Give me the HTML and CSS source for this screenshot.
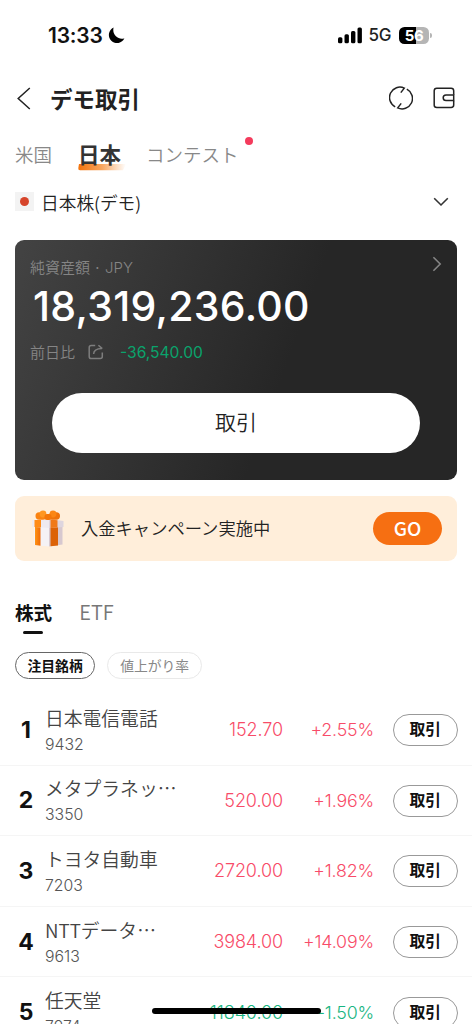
FILE: index.html
```html
<!DOCTYPE html>
<html lang="ja">
<head>
<meta charset="utf-8">
<meta name="viewport" content="width=device-width">
<title>デモ取引</title>
<link rel="stylesheet" href="styles.css">
</head>
<body>
<div class="screen">
  <div class="status">
    <span class="time">13:33</span>
    <svg class="moon" width="17" height="17" viewBox="0 0 17 17"><path d="M5.6 .6A8.1 8.1 0 1 0 16.4 11.2C11.5 13.6 3.6 8.6 5.6 .6Z" fill="#000"/></svg>
    <span class="spacer"></span>
    <svg class="signal" width="25" height="17" viewBox="0 0 25 17"><rect x="0" y="10.2" width="4.4" height="6" rx="1.5"/><rect x="6.5" y="7.3" width="4.4" height="8.9" rx="1.5"/><rect x="13" y="4" width="4.4" height="12.2" rx="1.5"/><rect x="19.5" y=".6" width="4.4" height="15.6" rx="1.5"/></svg>
    <span class="network">5G</span>
    <span class="battery">56</span>
    <span class="battery-cap"></span>
  </div>

  <header class="header">
    <svg class="back" width="14" height="23" viewBox="0 0 14 23"><path d="M12.8 1 1.2 11.5 12.8 22" fill="none" stroke="#222" stroke-width="1.5"/></svg>
    <h1 class="title">デモ取引</h1>
    <span class="spacer"></span>
    <svg class="refresh" width="24" height="24" viewBox="0 0 24 24" fill="none" stroke="#222" stroke-width="1.5"><path d="M6.2 20.8A10.4 10.4 0 0 1 15.3 2.1L11.8 6.6"/><path d="M17.8 3.2A10.4 10.4 0 0 1 8.7 21.9L12.2 17.4"/></svg>
    <svg class="wallet" width="22" height="22" viewBox="0 0 22 22" fill="none" stroke="#222" stroke-width="1.5"><path d="M20.7 7.7V3.8Q20.7 1.2 18.1 1.2H3.8Q1.2 1.2 1.2 3.8V18.2Q1.2 20.4 3.8 20.4H18.1Q20.7 20.4 20.7 18V13.7"/><path d="M20.7 7.9H13Q10.2 7.9 10.2 10.7T13 13.5H20.7Z"/></svg>
  </header>

  <nav class="markets">
    <span class="market">米国</span>
    <span class="market market-on"><svg class="swoosh" width="48" height="7" viewBox="0 0 48 7"><defs><linearGradient id="sw"><stop offset="0" stop-color="#f3730c"/><stop offset=".5" stop-color="#f9a65f"/><stop offset="1" stop-color="#fff"/></linearGradient></defs><path d="M1 0H48L45 6.2H2Q0 6.2 .3 4Z" fill="url(#sw)"/></svg><b class="market-label">日本</b></span>
    <span class="market market-contest">コンテスト<i class="dot"></i></span>
  </nav>

  <div class="account">
    <span class="flag"><i class="sun"></i></span>
    <span class="account-name">日本株(デモ)</span>
    <span class="spacer"></span>
    <svg width="16" height="10" viewBox="0 0 16 10"><path d="M1.2 1.3 8 8 14.8 1.3" fill="none" stroke="#333" stroke-width="1.6"/></svg>
  </div>

  <section class="card">
    <div class="card-head"><span>純資産額 · <span class="currency">JPY</span></span><svg width="10" height="16" viewBox="0 0 10 16"><path d="M1.4 1.2 8.2 8 1.4 14.8" fill="none" stroke="#858585" stroke-width="1.6"/></svg></div>
    <div class="total">18,319,236.00</div>
    <div class="change"><span>前日比</span><svg class="share" width="16" height="16" viewBox="0 0 16 16" fill="none" stroke="#7d7d7d" stroke-width="1.5"><path d="M7.2 1.6H3.2Q1.2 1.6 1.2 3.6V12.5Q1.2 14.6 3.2 14.6H12.3Q14.3 14.6 14.3 12.6V8.6"/><path d="M5.6 10Q5.9 4.8 13.8 4.6M10.4 1.2 14.3 4.6"/></svg><span class="diff">-36,540.00</span></div>
    <div class="trade-main">取引</div>
  </section>

  <section class="promo">
    <svg class="gift" width="32" height="37" viewBox="0 0 32 37">
      <defs><linearGradient id="or"><stop offset="0" stop-color="#ff9416"/><stop offset="1" stop-color="#ee6907"/></linearGradient></defs>
      <path d="M2 15H17V36.5L2 35Z" fill="#f5f2f5"/><path d="M17 15H30.5V34.5L17 36.5Z" fill="#d7c8cf"/>
      <path d="M3 17H8.5V35.8L3 35Z" fill="url(#or)"/><path d="M18.5 17H26V35.4L18.5 36.3Z" fill="#dc6206"/>
      <path d="M0 10 17 9V18L0 16.8Z" fill="#eeeaf0"/><path d="M17 9 31.5 11V17L17 18Z" fill="#ded5de"/>
      <path d="M2.5 10H9V17.3L2.5 17Z" fill="#ff8b16"/><path d="M18.5 9.5 25.5 10.2V17.5L18.5 18Z" fill="#f07918"/>
      <rect x="3.5" y="2.2" width="11" height="7.5" rx="3.7" fill="#fa8210"/><rect x="17" y="2.2" width="11" height="7.5" rx="3.7" fill="#ef730a"/>
      <circle cx="11" cy="4" r="3.4" fill="#ff9620"/><circle cx="21" cy="4" r="3.4" fill="#fb8613"/><rect x="12.5" y="4" width="7" height="6" rx="2.5" fill="#f37608"/>
    </svg>
    <span class="promo-text">入金キャンペーン実施中</span>
    <span class="spacer"></span>
    <span class="go">GO</span>
  </section>

  <nav class="kinds"><span class="kind kind-on">株式</span><span class="kind kind-etf">ETF</span></nav>

  <div class="chips"><span class="chip chip-on">注目銘柄</span><span class="chip">値上がり率</span></div>

  <div class="list">
    <div class="row"><span class="rank">1</span><div class="stock"><div class="name">日本電信電話</div><div class="code">9432</div></div><span class="price">152.70</span><span class="pct">+2.55%</span><span class="trade">取引</span></div>
    <div class="row"><span class="rank">2</span><div class="stock"><div class="name">メタプラネッ…</div><div class="code">3350</div></div><span class="price">520.00</span><span class="pct">+1.96%</span><span class="trade">取引</span></div>
    <div class="row"><span class="rank">3</span><div class="stock"><div class="name">トヨタ自動車</div><div class="code">7203</div></div><span class="price">2720.00</span><span class="pct">+1.82%</span><span class="trade">取引</span></div>
    <div class="row"><span class="rank">4</span><div class="stock"><div class="name">NTTデータ…</div><div class="code">9613</div></div><span class="price">3984.00</span><span class="pct">+14.09%</span><span class="trade">取引</span></div>
    <div class="row down"><span class="rank">5</span><div class="stock"><div class="name">任天堂</div><div class="code">7974</div></div><span class="price">11840.00</span><span class="pct">-1.50%</span><span class="trade">取引</span></div>
  </div>
  <div class="home-bar"></div>
</div>
</body>
</html>
```

FILE: styles.css
```css
* { box-sizing: border-box; }
body { margin: 0; background: #fff; font-family: "Noto Sans CJK JP", sans-serif; color: #222; }
.screen { position: relative; width: 472px; height: 1024px; overflow: hidden; display: flex; flex-direction: column; }
.screen > * { flex-shrink: 0; }
.spacer { flex: 1; }
svg { display: block; flex: none; }
span, h1 { white-space: nowrap; }

.status { height: 70px; padding: 0 40px 0 48px; display: flex; align-items: center; font-family: Inter, sans-serif; }
.time { font-size: 21px; font-weight: 600; letter-spacing: -.2px; color: #111; }
.moon { margin-left: 5px; }
.network { margin-left: 6px; font-size: 17px; font-weight: 500; letter-spacing: -.4px; }
.battery { margin-left: 8px; width: 30px; height: 17px; border-radius: 5.5px; background: linear-gradient(90deg, #000 57%, #b5b5b5 57%); color: #fff; font-size: 15px; line-height: 17px; font-weight: 700; text-align: center; letter-spacing: -.4px; }
.battery-cap { margin-left: 1px; width: 2px; height: 5px; border-radius: 0 2px 2px 0; background: #b5b5b5; }

.header { height: 56px; padding: 0 17px 0 17px; display: flex; align-items: center; }
.title { margin: 0 0 0 19px; font-size: 22.5px; line-height: 30px; font-weight: 700; }
.wallet { margin-left: 20px; }

.markets { height: 50px; padding: 8px 15px 0; display: flex; line-height: 40px; font-size: 18.5px; font-weight: 350; color: #888; }
.market-on { position: relative; margin-left: 26px; color: #333; font-size: 21.5px; }
.market-label { position: relative; font-weight: 700; }
.swoosh { position: absolute; left: 0; top: 30px; }
.market-contest { position: relative; margin-left: 25px; }
.dot { position: absolute; right: -14px; top: 3px; width: 8px; height: 8px; border-radius: 50%; background: #f43b5c; }

.account { height: 51px; padding: 0 23px 0 15px; display: flex; align-items: center; font-size: 17.7px; font-weight: 350; }
.flag { width: 19px; height: 19px; background: #f3f3f3; display: grid; place-items: center; }
.sun { width: 9px; height: 9px; border-radius: 50%; background: #d6452b; }
.account-name { margin-left: 7px; line-height: 24px; }

.card { margin: 12.5px 15px 0; height: 240.5px; padding: 16px 15px 0; border-radius: 9px; background: linear-gradient(110deg, #434343 0%, #262626 60%); color: #858585; font-size: 15px; font-weight: 350; }
.card-head { display: flex; justify-content: space-between; height: 22px; line-height: 22px; }
.currency { font-family: Inter, sans-serif; font-weight: 300; }
.total { height: 60px; margin-left: 3px; color: #fff; font: 500 41px/56px Inter, sans-serif; letter-spacing: .3px; }
.change { display: flex; align-items: center; height: 28px; }
.share { margin-left: 13px; }
.diff { margin-left: 16px; padding-top: 1px; color: #0aa36c; font-family: Inter, sans-serif; font-size: 15.6px; font-weight: 400; }
.trade-main { margin: 27px 22px 0; height: 60.5px; border-radius: 31px; background: #fff; color: #222; font-size: 21px; line-height: 57px; text-align: center; }

.promo { margin: 15.5px 15px 0; height: 65px; padding: 0 15px 0 17px; border-radius: 9px; background: #ffeeda; display: flex; align-items: center; }
.promo-text { margin-left: 17px; padding-bottom: 2px; font-size: 17.3px; font-weight: 350; }
.go { width: 69px; height: 33px; border-radius: 17px; background: #f66f12; color: #fff; font: 500 19px/31px "Noto Sans CJK JP", sans-serif; text-align: center; }

.kinds { height: 91px; padding: 35px 15px 0; display: flex; gap: 27px; font-size: 18.6px; line-height: 32px; }
.kind-on { position: relative; font-weight: 700; color: #111; }
.kind-on::after { content: ""; position: absolute; left: 8px; top: 35px; width: 20px; height: 3px; border-radius: 2px; background: #111; }
.kind-etf { font-weight: 350; color: #777; font-size: 20px; }

.chips { height: 43.5px; padding-left: 15px; display: flex; gap: 12px; }
.chip { height: 27px; padding: 0 12px; border: 1px solid #e9e9e9; border-radius: 14px; font-size: 13.8px; line-height: 24px; font-weight: 400; color: #888; }
.chip-on { border-color: #666; color: #111; font-weight: 700; padding: 0 11.5px; }

.row { height: 70.6px; padding-right: 14.5px; display: grid; grid-template-columns: 45px 138px 100px 91px 1fr; align-items: center; border-bottom: 1.5px solid #f5f5f5; font-family: Inter, "Noto Sans CJK JP", sans-serif; }
.rank { padding-left: 7px; text-align: center; font-size: 23px; font-weight: 700; color: #111; }
.name { height: 28px; line-height: 28px; font-family: "Noto Sans CJK JP", sans-serif; font-size: 18.8px; font-weight: 350; color: #444; white-space: nowrap; }
.code { height: 24px; line-height: 25px; font-size: 15.8px; font-weight: 300; color: #555; }
.price, .pct { text-align: right; font-size: 18px; font-weight: 350; letter-spacing: -.1px; color: #f84b68; }
.pct { font-size: 17.8px; letter-spacing: -.15px; }
.down .price, .down .pct { color: #18b581; }
.trade { justify-self: end; margin-top: 1px; width: 64.5px; height: 32px; border: 1.4px solid #999; border-radius: 16px; text-align: center; font: 700 15.8px/27px "Noto Sans CJK JP", sans-serif; color: #111; }
.home-bar { position: absolute; left: 152px; top: 1008px; width: 169px; height: 6px; border-radius: 3px; background: #000; }
```
